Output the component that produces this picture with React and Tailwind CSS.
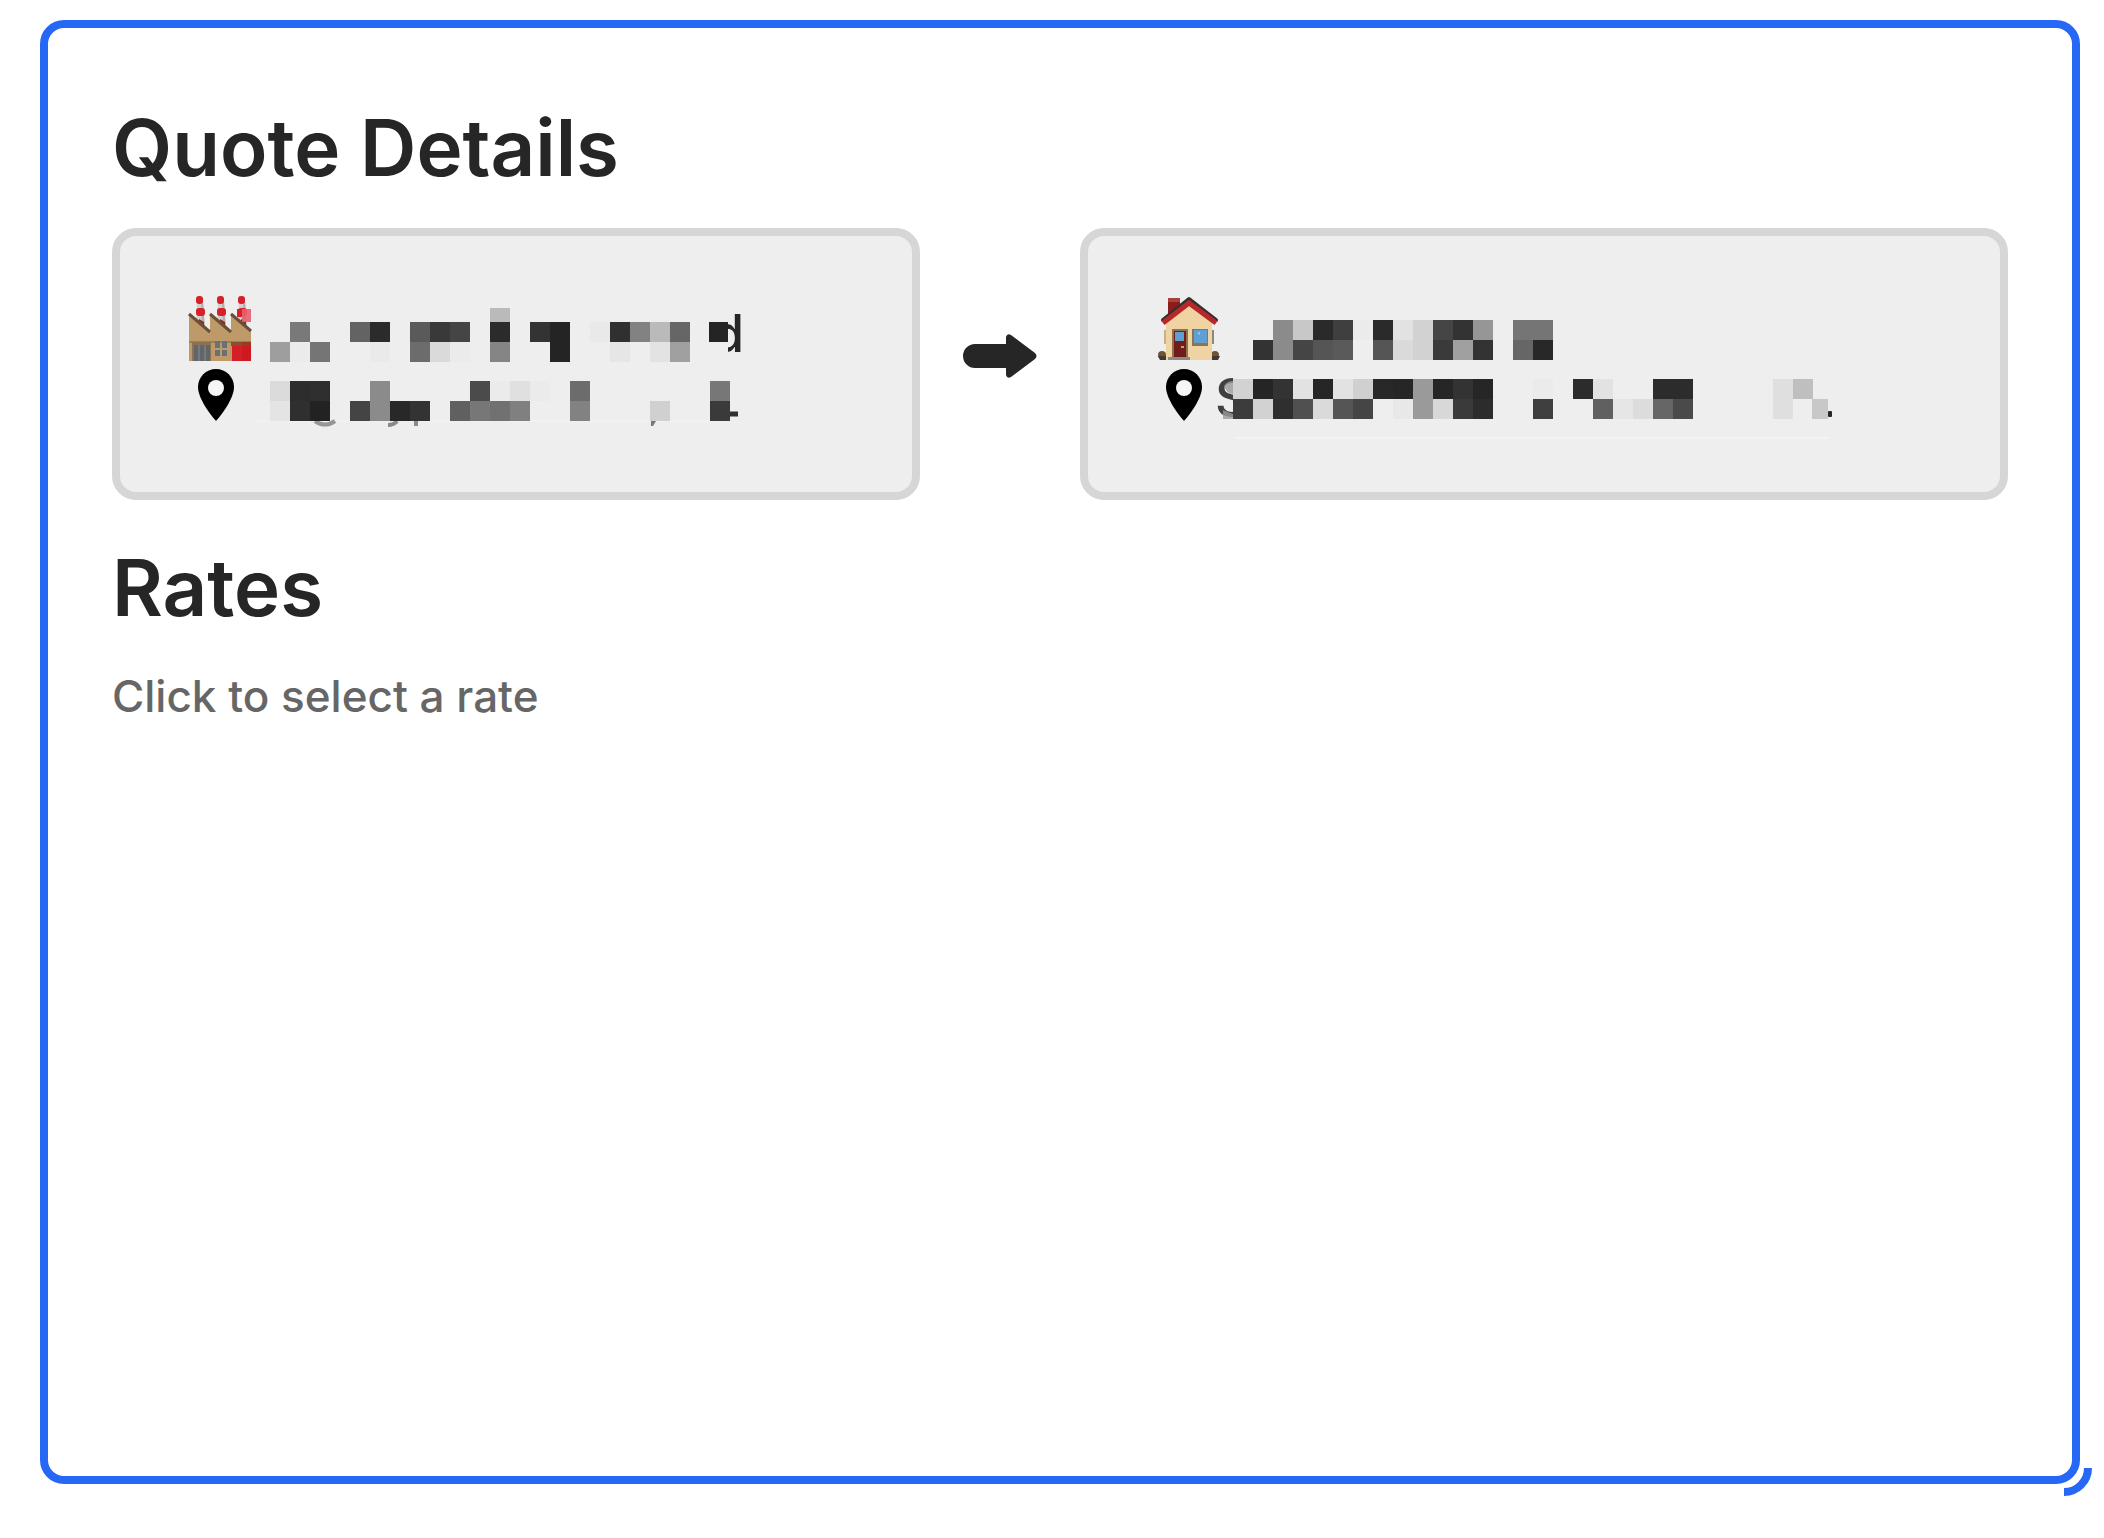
import React from 'react'

const CELL = 20

// [column, row, colour] of every covered cell
const originName = [
  [1, 0, '#797979'], [4, 0, '#636363'], [5, 0, '#2b2b2b'], [7, 0, '#5a5a5a'], [8, 0, '#393939'], [9, 0, '#454545'],
  [11, 0, '#2b2b2b'], [13, 0, '#333333'], [14, 0, '#242424'], [16, 0, '#e9e9e9'], [17, 0, '#303030'], [18, 0, '#828282'],
  [19, 0, '#bababa'], [20, 0, '#666666'],
  [0, 1, '#9e9e9e'], [1, 1, '#ebebeb'], [2, 1, '#757575'], [5, 1, '#eaeaea'], [7, 1, '#6c6c6c'], [8, 1, '#dadada'],
  [9, 1, '#ebebeb'], [11, 1, '#858585'], [14, 1, '#242424'], [17, 1, '#e6e6e6'], [19, 1, '#e3e3e3'], [20, 1, '#a0a0a0'],
]

const originPlace = [
  [0, 0, '#dbdbdb'], [1, 0, '#2d2d2d'], [2, 0, '#2f2f2f'], [5, 0, '#8b8b8b'], [10, 0, '#4b4b4b'], [11, 0, '#ebebeb'],
  [12, 0, '#e0e0e0'], [13, 0, '#ebebeb'], [15, 0, '#6c6c6c'], [22, 0, '#777777'],
  [0, 1, '#e4e4e4'], [1, 1, '#2f2f2f'], [2, 1, '#222222'], [4, 1, '#444444'], [5, 1, '#8b8b8b'], [6, 1, '#282828'],
  [7, 1, '#333333'], [9, 1, '#606060'], [10, 1, '#777777'], [11, 1, '#717171'], [12, 1, '#808080'], [15, 1, '#828282'],
  [19, 1, '#d0d0d0'], [22, 1, '#3a3a3a'],
]

const targetName = [
  [1, 0, '#8b8b8b'], [2, 0, '#c8c8c8'], [3, 0, '#2a2a2a'], [4, 0, '#3f3f3f'], [5, 0, '#ebebeb'], [6, 0, '#2a2a2a'],
  [7, 0, '#e2e2e2'], [8, 0, '#d2d2d2'], [9, 0, '#454545'], [10, 0, '#333333'], [11, 0, '#969696'], [13, 0, '#757575'],
  [14, 0, '#757575'],
  [0, 1, '#333333'], [1, 1, '#8b8b8b'], [2, 1, '#454545'], [3, 1, '#555555'], [4, 1, '#5a5a5a'], [6, 1, '#555555'],
  [7, 1, '#dadada'], [8, 1, '#d2d2d2'], [9, 1, '#3a3a3a'], [10, 1, '#a0a0a0'], [11, 1, '#333333'], [13, 1, '#666666'],
  [14, 1, '#282828'],
]

const targetPlace = [
  [0, 0, '#d2d2d2'], [1, 0, '#252525'], [2, 0, '#333333'], [3, 0, '#e2e2e2'], [4, 0, '#262626'], [5, 0, '#e2e2e2'],
  [6, 0, '#d0d0d0'], [7, 0, '#282828'], [8, 0, '#262626'], [9, 0, '#9a9a9a'], [10, 0, '#262626'], [11, 0, '#333333'],
  [12, 0, '#262626'], [15, 0, '#ebebeb'], [17, 0, '#2c2c2c'], [18, 0, '#e2e2e2'], [21, 0, '#2c2c2c'], [22, 0, '#2c2c2c'],
  [27, 0, '#dfdfdf'], [28, 0, '#bfbfbf'],
  [0, 1, '#3c3c3c'], [1, 1, '#d2d2d2'], [2, 1, '#2f2f2f'], [3, 1, '#505050'], [4, 1, '#dadada'], [5, 1, '#555555'],
  [6, 1, '#454545'], [7, 1, '#eeeeee'], [8, 1, '#e8e8e8'], [9, 1, '#9a9a9a'], [10, 1, '#d8d8d8'], [11, 1, '#3a3a3a'],
  [12, 1, '#2c2c2c'], [15, 1, '#3f3f3f'], [18, 1, '#606060'], [19, 1, '#e6e6e6'], [20, 1, '#dcdcdc'], [21, 1, '#666666'],
  [22, 1, '#4a4a4a'], [27, 1, '#dfdfdf'],
]

const Cells = ({ x, y, cells }) => (
  <g shapeRendering="crispEdges">
    {cells.map(([col, row, fill]) => (
      <rect key={`${col}-${row}`} x={x + col * CELL} y={y + row * CELL} width={CELL} height={CELL} fill={fill} />
    ))}
  </g>
)

const FactoryIcon = () => (
  <svg viewBox="0 0 64 66" className="h-[66px] w-16 shrink-0" aria-hidden="true">
    {[12, 33, 54].map((x) => (
      <g key={x}>
        <path d={`M${x - 3} 4 h6 l2 30 h-9 z`} fill="#d3d0ce" />
        <path d={`M${x + 1} 4 h2 l2 30 h-3 z`} fill="#b5b0ad" />
        <rect x={x - 4} y="0" width="7" height="8" rx="3" fill="#d8202a" />
        <rect x={x - 4} y="12" width="9" height="8" rx="3" fill="#d8202a" />
        <path d={`M${x - 1} 23 l5 3 v7 l-5 -4 z`} fill="#8a2c20" />
      </g>
    ))}
    <path d="M1 18 L22 36 V18 L43 36 V18 L63 35 V65 H1 Z" fill="#bd9a68" />
    <path d="M1 18 L22 36 M22 18 L43 36 M43 18 L63 35" stroke="#6b4f38" strokeWidth="3" />
    <path d="M1 46 H63" stroke="#a27c4f" strokeWidth="2" />
    <rect x="4" y="46" width="19" height="19" fill="#8b7250" />
    <path d="M6 49 h16 v16 h-16 z" fill="#62666a" />
    <path d="M11 49 v16 M17 49 v16" stroke="#8d8b88" strokeWidth="1" />
    <path d="M27 45 h5 v7 h-5 z M34 45 h5 v7 h-5 z M27 54 h5 v6 h-5 z M34 54 h5 v6 h-5 z" fill="#667178" />
    <rect x="43" y="46" width="20" height="4" fill="#85502f" />
    <rect x="44" y="50" width="19" height="15" fill="#d41f28" />
    <rect x="54" y="13" width="9" height="13" fill="#e5606c" fillOpacity="0.9" />
    <path d="M49 13 h5 v8 h-5 z" fill="#d8202a" />
    <rect x="54" y="46" width="9" height="19" fill="#c01018" fillOpacity="0.35" />
  </svg>
)

const HouseIcon = () => (
  <svg viewBox="0 0 64 66" className="h-[66px] w-16 shrink-0" aria-hidden="true">
    <circle cx="6" cy="59" r="4" fill="#6d5436" />
    <circle cx="59" cy="59" r="4" fill="#6d5436" />
    <path d="M2 60 h9 v4 h-7 z M55 60 h9 l-2 4 h-7 z" fill="#3f3a34" />
    <rect x="8" y="34" width="3" height="14" fill="#c9b08a" />
    <rect x="55" y="34" width="3" height="14" fill="#8f8878" />
    <rect x="12" y="2" width="12" height="22" fill="#8c1d1d" />
    <rect x="12" y="2" width="12" height="4" fill="#a8433a" />
    <path d="M10 26 L33 6 L56 26 V64 H10 Z" fill="#f0d3a2" />
    <path d="M7 24 L33 3 L60 24" fill="none" stroke="#33302f" strokeWidth="4" strokeLinejoin="round" strokeLinecap="round" />
    <path d="M7 27 L33 7 L60 27" fill="none" stroke="#b8282b" strokeWidth="5" strokeLinejoin="miter" />
    <rect x="16" y="33" width="16" height="31" fill="#8f7350" />
    <rect x="18" y="35" width="12" height="27" fill="#6f1c1a" />
    <rect x="19" y="36" width="9" height="9" fill="#5ea0d4" />
    <path d="M25 50 h3 v2 h-3 z" fill="#c9a06a" />
    <path d="M12 61 h22 v3 h-22 z" fill="#8f8a82" />
    <rect x="36" y="33" width="16" height="17" fill="#8f7350" />
    <rect x="38" y="34" width="13" height="13" fill="#5ea0d4" />
    <path d="M41 37 l3 -1 v3 z" fill="#9cc8e8" />
  </svg>
)

const PinIcon = () => (
  <svg viewBox="0 0 64 66" className="h-[66px] w-16 shrink-0" aria-hidden="true">
    <path d="M28 7 C18 7 10 15 10 25 C10 39 28 59 28 59 S46 39 46 25 C46 15 38 7 28 7 Z" fill="#000" />
    <circle cx="28" cy="26" r="8" fill="#f6f6f6" />
  </svg>
)

const ArrowIcon = () => (
  <svg viewBox="0 0 74 60" className="h-[60px] w-[74px]" role="img" aria-label="to">
    <path d="M12 10 H43 V3 Q44 -1 48 1 L72 19 Q75 22 72 25 L48 43 Q44 45 43 41 V34 H12 A12 12 0 0 1 12 10 Z" fill="#262626" />
  </svg>
)

const textClass = "font-[Inter,'Liberation_Sans',sans-serif] text-[52px] font-medium"

const Card = ({ children }) => (
  <div className="min-w-0 rounded-3xl border-8 border-[#d6d6d6] bg-[#eeeeee] px-[68px] pt-[60px] pb-16">
    {children}
  </div>
)

const App = () => {
  return (
    <div className="min-h-screen bg-white pt-5 pr-6 pb-[54px] pl-10 font-[Inter,'Liberation_Sans',sans-serif] text-[#262626]">
      <main className="relative min-h-[calc(100vh-74px)] rounded-3xl border-8 border-[#2667f6] px-16 pt-[72px] pb-16">
        <section>
          <h2 className="mb-8 text-[78px] leading-[96px] font-semibold">Quote Details</h2>
          <div className="grid grid-cols-[101fr_160px_116fr] items-center">
            <Card>
              <div className="flex">
                <FactoryIcon />
                <svg viewBox="0 0 496 66" className="h-[66px] w-[496px] shrink-0 overflow-visible">
                  <text x="460" y="56" className={textClass} fill="#262626">d</text>
                  <rect x="455" y="12" width="21" height="50" fill="#eeeeee" />
                  <rect x="238" y="12" width="20" height="14" fill="#bababa" />
                  <Cells x={18} y={26} cells={originName} />
                  <rect x="457" y="26" width="19" height="20" fill="#242424" />
                </svg>
              </div>
              <div className="flex">
                <PinIcon />
                <svg viewBox="0 0 496 66" className="h-[66px] w-[496px] shrink-0 overflow-visible">
                  <path d="M0 59 H476" stroke="#f4f4f4" />
                  <path d="M63 59 Q73 66 83 59" fill="none" stroke="#969696" strokeWidth="4" />
                  <path d="M136 63 Q142 63 145 59 M164 59 V64" fill="none" stroke="#8a8a8a" strokeWidth="4" />
                  <path d="M399 59 h5 l-3 5 h-2 z" fill="#777777" />
                  <path d="M476 52 H486" stroke="#303030" strokeWidth="5" />
                  <Cells x={18} y={19} cells={originPlace} />
                </svg>
              </div>
            </Card>
            <div className="flex justify-center">
              <ArrowIcon />
            </div>
            <Card>
              <div className="flex">
                <HouseIcon />
                <svg viewBox="0 0 620 66" className="h-[66px] w-[620px] shrink-0">
                  <Cells x={33} y={24} cells={targetName} />
                </svg>
              </div>
              <div className="flex">
                <PinIcon />
                <svg viewBox="0 0 620 66" className="h-[66px] w-[620px] shrink-0 overflow-visible">
                  <text x="-5" y="54" className={textClass} fill="#404040">S</text>
                  <rect x="13" y="10" width="22" height="50" fill="#eeeeee" />
                  <path d="M4 24 Q7 19 13 19 V32 Q6 31 4 24 Z M3 48 L13 52 V57 H3 Z" fill="#9a9a9a" fillOpacity="0.8" />
                  <Cells x={13} y={17} cells={targetPlace} />
                  <rect x="592" y="37" width="16" height="20" fill="#c8c8c8" />
                  <rect x="608" y="49" width="4" height="6" rx="1" fill="#262626" />
                  <path d="M16 76 H608" stroke="#f8f8f8" />
                </svg>
              </div>
            </Card>
          </div>
        </section>

        <section className="mt-10">
          <h2 className="mb-8 text-[78px] leading-[96px] font-semibold">Rates</h2>
          <p className="text-[44px] leading-[56px] font-medium text-[#666666]">Click to select a rate</p>
        </section>

        {/* resize grip */}
        <svg viewBox="0 0 28 28" className="absolute -right-5 -bottom-5 size-7" aria-hidden="true">
          <path d="M24 0 A24 24 0 0 1 0 24" fill="none" stroke="#2667f6" strokeWidth="8" />
        </svg>
      </main>
    </div>
  )
}

export default App
